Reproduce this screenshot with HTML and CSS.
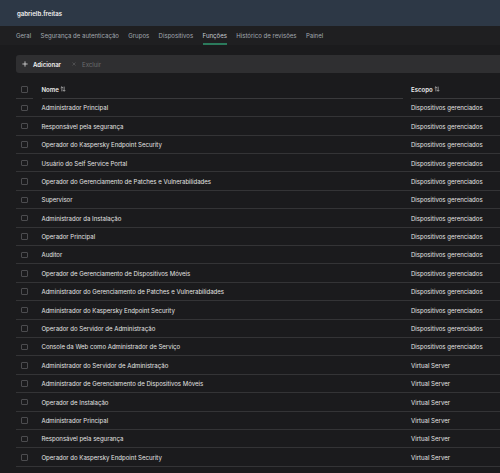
FILE: index.html
```html
<!DOCTYPE html>
<html lang="pt">
<head>
<meta charset="utf-8">
<link rel="stylesheet" href="styles.css">
</head>
<body>
<header class="topbar"><span class="user">gabrielb.freitas</span></header>
<nav class="tabs">
  <span class="tab">Geral</span>
  <span class="tab">Segurança de autenticação</span>
  <span class="tab">Grupos</span>
  <span class="tab">Dispositivos</span>
  <span class="tab active">Funções</span>
  <span class="tab">Histórico de revisões</span>
  <span class="tab">Painel</span>
</nav>
<main class="content">
  <div class="toolbar">
    <span class="btn add"><svg class="ico" viewBox="0 0 8 8"><path d="M4 0.5V7.5M0.5 4H7.5" stroke="#e8e8e8" stroke-width="1"/></svg>Adicionar</span>
    <span class="btn del"><svg class="ico small" viewBox="0 0 8 8"><path d="M1 1L7 7M7 1L1 7" stroke="#6c6c6e" stroke-width="1"/></svg>Excluir</span>
  </div>
  <div class="table">
    <div class="row head">
      <div class="cell chk"><span class="box"></span></div>
      <div class="cell name">Nome <svg class="sort" viewBox="0 0 8 8"><path d="M2.5 7.2V1M0.9 2.6L2.5 1L4.1 2.6M5.5 0.8V7M3.9 5.4L5.5 7L7.1 5.4" stroke="#d0d0d0" stroke-width="0.85" fill="none"/></svg></div>
      <div class="cell scope">Escopo <svg class="sort" viewBox="0 0 8 8"><path d="M2.5 7.2V1M0.9 2.6L2.5 1L4.1 2.6M5.5 0.8V7M3.9 5.4L5.5 7L7.1 5.4" stroke="#d0d0d0" stroke-width="0.85" fill="none"/></svg></div>
    </div>
    <div class="row"><div class="cell chk"><span class="box"></span></div><div class="cell name">Administrador Principal</div><div class="cell scope">Dispositivos gerenciados</div></div>
    <div class="row"><div class="cell chk"><span class="box"></span></div><div class="cell name">Responsável pela segurança</div><div class="cell scope">Dispositivos gerenciados</div></div>
    <div class="row"><div class="cell chk"><span class="box"></span></div><div class="cell name">Operador do Kaspersky Endpoint Security</div><div class="cell scope">Dispositivos gerenciados</div></div>
    <div class="row"><div class="cell chk"><span class="box"></span></div><div class="cell name">Usuário do Self Service Portal</div><div class="cell scope">Dispositivos gerenciados</div></div>
    <div class="row"><div class="cell chk"><span class="box"></span></div><div class="cell name">Operador do Gerenciamento de Patches e Vulnerabilidades</div><div class="cell scope">Dispositivos gerenciados</div></div>
    <div class="row"><div class="cell chk"><span class="box"></span></div><div class="cell name">Supervisor</div><div class="cell scope">Dispositivos gerenciados</div></div>
    <div class="row"><div class="cell chk"><span class="box"></span></div><div class="cell name">Administrador da Instalação</div><div class="cell scope">Dispositivos gerenciados</div></div>
    <div class="row"><div class="cell chk"><span class="box"></span></div><div class="cell name">Operador Principal</div><div class="cell scope">Dispositivos gerenciados</div></div>
    <div class="row"><div class="cell chk"><span class="box"></span></div><div class="cell name">Auditor</div><div class="cell scope">Dispositivos gerenciados</div></div>
    <div class="row"><div class="cell chk"><span class="box"></span></div><div class="cell name">Operador de Gerenciamento de Dispositivos Móveis</div><div class="cell scope">Dispositivos gerenciados</div></div>
    <div class="row"><div class="cell chk"><span class="box"></span></div><div class="cell name">Administrador do Gerenciamento de Patches e Vulnerabilidades</div><div class="cell scope">Dispositivos gerenciados</div></div>
    <div class="row"><div class="cell chk"><span class="box"></span></div><div class="cell name">Administrador do Kaspersky Endpoint Security</div><div class="cell scope">Dispositivos gerenciados</div></div>
    <div class="row"><div class="cell chk"><span class="box"></span></div><div class="cell name">Operador do Servidor de Administração</div><div class="cell scope">Dispositivos gerenciados</div></div>
    <div class="row"><div class="cell chk"><span class="box"></span></div><div class="cell name">Console da Web como Administrador de Serviço</div><div class="cell scope">Dispositivos gerenciados</div></div>
    <div class="row"><div class="cell chk"><span class="box"></span></div><div class="cell name">Administrador do Servidor de Administração</div><div class="cell scope">Virtual Server</div></div>
    <div class="row"><div class="cell chk"><span class="box"></span></div><div class="cell name">Administrador de Gerenciamento de Dispositivos Móveis</div><div class="cell scope">Virtual Server</div></div>
    <div class="row"><div class="cell chk"><span class="box"></span></div><div class="cell name">Operador de Instalação</div><div class="cell scope">Virtual Server</div></div>
    <div class="row"><div class="cell chk"><span class="box"></span></div><div class="cell name">Administrador Principal</div><div class="cell scope">Virtual Server</div></div>
    <div class="row"><div class="cell chk"><span class="box"></span></div><div class="cell name">Responsável pela segurança</div><div class="cell scope">Virtual Server</div></div>
    <div class="row"><div class="cell chk"><span class="box"></span></div><div class="cell name">Operador do Kaspersky Endpoint Security</div><div class="cell scope">Virtual Server</div></div>
  </div>
</main>
</body>
</html>
```
FILE: styles.css
```css
* { box-sizing: border-box; }
html, body { margin: 0; padding: 0; }
body {
  background: #1b1b1d;
  font-family: Inter, "Noto Sans", sans-serif;
  font-size: 6.05px;
  color: #e4e4e4;
  width: 500px;
  height: 473px;
  overflow: hidden;
}
.topbar {
  height: 26px;
  background: #2d3846;
  display: flex;
  align-items: center;
  padding-left: 17px;
}
.user { font-weight: 600; color: #f2f2f2; font-size: 6.1px; }
.tabs {
  height: 19px;
  background: #1f1f21;
  display: flex;
  align-items: stretch;
  padding-left: 16px;
  gap: 9.4px;
}
.tab {
  display: flex;
  align-items: center;
  color: #a2a9b0;
  border-bottom: 2px solid transparent;
  padding-top: 2px;
}
.tab.active { color: #c8cdd2; border-bottom-color: #2b7a5c; }
.content { padding: 10px 0 0 16px; }
.toolbar {
  height: 18px;
  background: #2f2f31;
  border-radius: 3px 0 0 3px;
  display: flex;
  align-items: center;
  padding-left: 6px;
  gap: 11px;
}
.btn { display: flex; align-items: center; gap: 5px; }
.btn.add { color: #f0f0f0; font-weight: 600; }
.btn.del { color: #6c6c6e; gap: 6px; }
.ico { width: 6px; height: 6px; }
.ico.small { width: 4px; height: 4px; }
.table { margin-top: 7.5px; }
.row {
  display: grid;
  grid-template-columns: 17px 1fr 89px;
  column-gap: 8.5px;
  height: 18.4px;
  align-items: stretch;
  border-bottom: 1px solid #343436;
  padding-top: 0.5px;
}
.row.head { border-bottom: none; font-weight: 600; color: #eaeaea; }
.row.head .cell { border-bottom: 1px solid #3a3a3c; }
.cell { display: flex; align-items: center; white-space: nowrap; }
.chk { justify-content: center; }
.box {
  width: 6.5px; height: 6.5px;
  border: 1px solid #4c4c4f;
  border-radius: 1px;
}
.sort { width: 6px; height: 6px; margin-left: 1px; }
```
